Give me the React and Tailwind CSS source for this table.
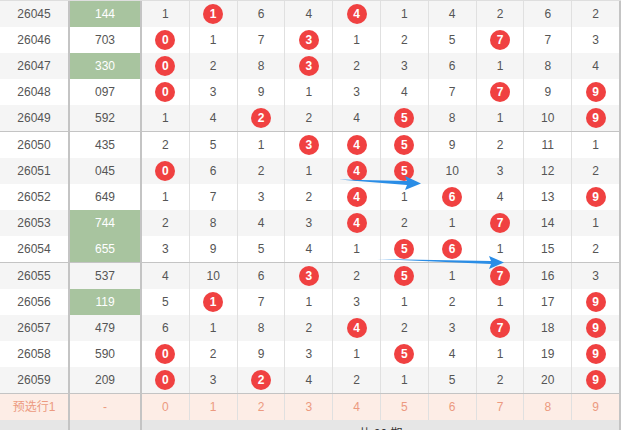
import React from "react";

// each row: period, number, highlight flag, then 10 cells (ball digits as strings prefixed with "*")
const rows = [
  ["26045", "144", true, [1, "*1", 6, 4, "*4", 1, 4, 2, 6, 2]],
  ["26046", "703", false, ["*0", 1, 7, "*3", 1, 2, 5, "*7", 7, 3]],
  ["26047", "330", true, ["*0", 2, 8, "*3", 2, 3, 6, 1, 8, 4]],
  ["26048", "097", false, ["*0", 3, 9, 1, 3, 4, 7, "*7", 9, "*9"]],
  ["26049", "592", false, [1, 4, "*2", 2, 4, "*5", 8, 1, 10, "*9"]],
  ["26050", "435", false, [2, 5, 1, "*3", "*4", "*5", 9, 2, 11, 1]],
  ["26051", "045", false, ["*0", 6, 2, 1, "*4", "*5", 10, 3, 12, 2]],
  ["26052", "649", false, [1, 7, 3, 2, "*4", 1, "*6", 4, 13, "*9"]],
  ["26053", "744", true, [2, 8, 4, 3, "*4", 2, 1, "*7", 14, 1]],
  ["26054", "655", true, [3, 9, 5, 4, 1, "*5", "*6", 1, 15, 2]],
  ["26055", "537", false, [4, 10, 6, "*3", 2, "*5", 1, "*7", 16, 3]],
  ["26056", "119", true, [5, "*1", 7, 1, 3, 1, 2, 1, 17, "*9"]],
  ["26057", "479", false, [6, 1, 8, 2, "*4", 2, 3, "*7", 18, "*9"]],
  ["26058", "590", false, ["*0", 2, 9, 3, 1, "*5", 4, 1, 19, "*9"]],
  ["26059", "209", false, ["*0", 3, "*2", 4, 2, 1, 5, 2, 20, "*9"]],
];

const Cell = ({ v, last }) => {
  const ball = typeof v === "string" && v.startsWith("*");
  return (
    <div
      className={
        "flex-1 flex items-center justify-center " +
        (last ? "border-r-2 border-[#c4c4c4]" : "border-r border-[#e0e0e0]")
      }
    >
      {ball ? (
        <span className="w-[20px] h-[20px] rounded-full bg-[#f04141] text-white font-bold flex items-center justify-center leading-none">
          {v.slice(1)}
        </span>
      ) : (
        v
      )}
    </div>
  );
};

const App = () => {
  return (
    <div className="relative w-[622px] h-[430px] overflow-hidden bg-white text-[12px] text-[#555] font-['Liberation_Sans','Noto_Sans_CJK_SC',sans-serif]">
      <div className="w-[621px] border-t border-[#dedede]">
        {rows.map((r, i) => (
          <div
            key={r[0]}
            className={
              "flex h-[26px] " +
              (i % 2 === 0 ? "bg-[#f5f5f5] " : "bg-white ") +
              (i % 5 === 4 ? "h-[27px] border-b border-[#c4c4c4]" : "")
            }
          >
            <div className="w-[70px] border-r-2 border-[#c4c4c4] flex items-center justify-center">
              {r[0]}
            </div>
            <div
              className={
                "w-[72px] border-r-2 border-[#c4c4c4] flex items-center justify-center " +
                (r[2] ? "bg-[#a8c49f] text-white" : "")
              }
            >
              {r[1]}
            </div>
            {r[3].map((v, j) => (
              <Cell key={j} v={v} last={j === 9} />
            ))}
          </div>
        ))}

        {/* preset row */}
        <div className="flex h-[26px] bg-[#fdede6] text-[#ec9a80]">
          <div className="w-[70px] border-r-2 border-[#c4c4c4] flex items-center justify-center">
            预选行1
          </div>
          <div className="w-[72px] border-r-2 border-[#c4c4c4] flex items-center justify-center">
            -
          </div>
          {[0, 1, 2, 3, 4, 5, 6, 7, 8, 9].map((n) => (
            <Cell key={n} v={n} last={n === 9} />
          ))}
        </div>

        <div className="flex h-[30px] bg-[#e6e6e6] text-[#333]">
          <div className="w-[70px] border-r-2 border-[#c4c4c4]"></div>
          <div className="w-[72px] border-r-2 border-[#c4c4c4]"></div>
          <div className="flex-1 pt-[6px] leading-[16px] text-center border-r-2 border-[#c4c4c4]">
            共 20 期
          </div>
        </div>
      </div>

      {/* arrows drawn over the table */}
      <svg className="absolute left-0 top-0" width="622" height="430">
        <path d="M339 179.5 L407 181 L405 176 L421 183.5 L405 190 L407 185 Z" fill="#2a8de6" />
        <path d="M377 259 L491 261 L489 256 L504 262.5 L489 269 L491 264 Z" fill="#2a8de6" />
      </svg>
    </div>
  );
};

export default App;
